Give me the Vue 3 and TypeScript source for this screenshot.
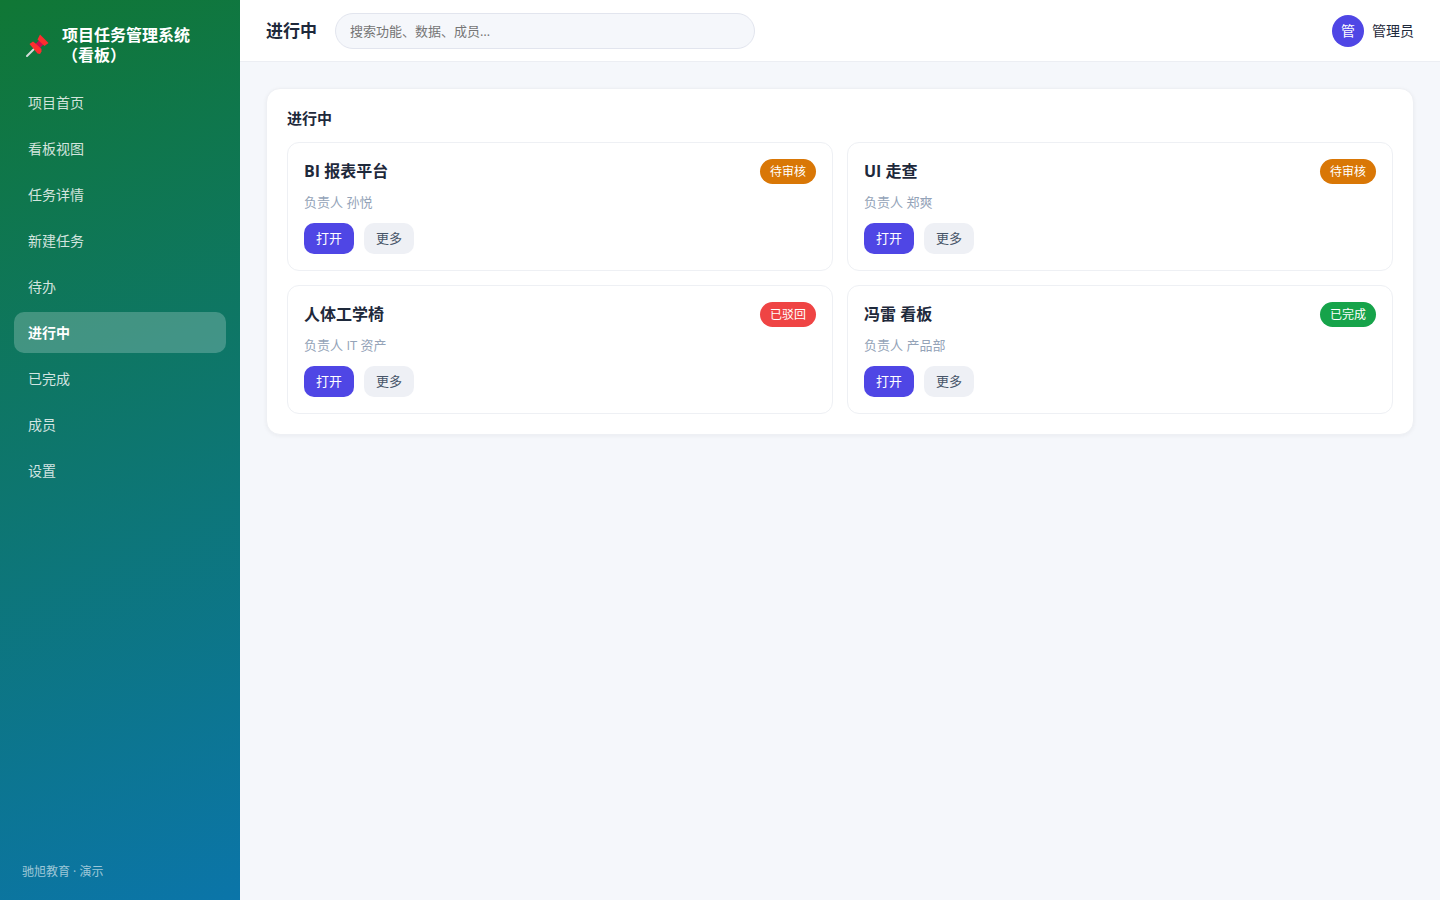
<script setup lang="ts">
interface NavItem {
  label: string
  active?: boolean
}

interface TaskCard {
  title: string
  owner: string
  status: string
  tone: 'pending' | 'rejected' | 'done'
}

const navItems: NavItem[] = [
  { label: '项目首页' },
  { label: '看板视图' },
  { label: '任务详情' },
  { label: '新建任务' },
  { label: '待办' },
  { label: '进行中', active: true },
  { label: '已完成' },
  { label: '成员' },
  { label: '设置' },
]

const cards: TaskCard[] = [
  { title: 'BI 报表平台', owner: '孙悦', status: '待审核', tone: 'pending' },
  { title: 'UI 走查', owner: '郑爽', status: '待审核', tone: 'pending' },
  { title: '人体工学椅', owner: 'IT 资产', status: '已驳回', tone: 'rejected' },
  { title: '冯雷 看板', owner: '产品部', status: '已完成', tone: 'done' },
]
</script>

<template>
  <div class="layout">
    <aside class="sidebar">
      <div class="brand">
        <svg class="brand-icon" viewBox="0 0 26 26" aria-hidden="true">
          <path d="M3 24 10 17" stroke="#d5dcda" stroke-width="2" stroke-linecap="round" />
          <path d="M11 12.500 16.500 7 21 11 15 17z" fill="#c8104e" />
          <path d="M16 2.500 24.500 11 20.500 14 13.500 7.500z" fill="#ff2d2f" />
          <path d="M5.500 12 9 9.500 11 11 17.500 17 17.500 19.500 16 22 13.500 21.500z" fill="#ff2d2f" />
        </svg>
        <span class="brand-name">项目任务管理系统（看板）</span>
      </div>
      <nav class="nav">
        <a
          v-for="item in navItems"
          :key="item.label"
          href="#"
          class="nav-link"
          :class="{ active: item.active }"
          :aria-current="item.active ? 'page' : undefined"
        >{{ item.label }}</a>
      </nav>
      <div class="sidebar-foot">驰旭教育 · 演示</div>
    </aside>

    <div class="main">
      <header class="topbar">
        <h1 class="page-title">进行中</h1>
        <input class="search" type="search" placeholder="搜索功能、数据、成员…" aria-label="搜索" />
        <div class="user">
          <span class="avatar">管</span>
          <span>管理员</span>
        </div>
      </header>

      <main class="content">
        <section class="panel">
          <h2 class="panel-title">进行中</h2>
          <div class="grid">
            <article v-for="card in cards" :key="card.title" class="card">
              <div class="card-head">
                <h3 class="card-title">{{ card.title }}</h3>
                <span class="badge" :class="card.tone">{{ card.status }}</span>
              </div>
              <p class="owner">负责人 {{ card.owner }}</p>
              <div class="actions">
                <button type="button" class="btn primary">打开</button>
                <button type="button" class="btn">更多</button>
              </div>
            </article>
          </div>
        </section>
      </main>
    </div>
  </div>
</template>

<style>
body {
  margin: 0;
}
</style>

<style scoped>
.layout,
.layout * {
  box-sizing: border-box;
}

.layout {
  display: flex;
  min-height: 100vh;
  background: #f5f7fb;
  color: #1e293b;
  font-family: "Open Sans", "Noto Sans CJK SC", sans-serif;
  font-size: 14px;
  line-height: 21px;
}

.sidebar {
  display: flex;
  flex: none;
  flex-direction: column;
  width: 240px;
  padding: 22px 14px 18px;
  background: linear-gradient(160deg, #107735, #0b75a9);
  color: #fff;
}

.brand {
  display: flex;
  align-items: center;
  gap: 12px;
  padding: 3px 8px 17px 10px;
}

.brand-icon {
  flex: none;
  width: 26px;
  height: 26px;
  fill: none;
}

.brand-name {
  font-size: 16px;
  font-weight: 700;
  line-height: 20px;
}

.nav {
  display: flex;
  flex: 1;
  flex-direction: column;
  gap: 5px;
}

.nav-link {
  padding: 10px 14px;
  border-radius: 10px;
  color: rgba(255, 255, 255, 0.82);
  text-decoration: none;
}

.nav-link.active {
  background: rgba(255, 255, 255, 0.22);
  color: #fff;
  font-weight: 700;
}

.sidebar-foot {
  padding: 0 8px;
  color: rgba(255, 255, 255, 0.6);
  font-size: 12px;
}

.main {
  display: flex;
  flex: 1;
  flex-direction: column;
  min-width: 0;
}

.topbar {
  display: flex;
  align-items: center;
  gap: 18px;
  height: 62px;
  padding: 0 26px;
  border-bottom: 1px solid #eceef3;
  background: #fff;
}

.page-title {
  flex: none;
  margin: 0;
  font-size: 17px;
  font-weight: 700;
  line-height: 25px;
}

.search {
  width: 420px;
  height: 36px;
  padding: 0 14px;
  border: 1px solid #e2e5ee;
  border-radius: 18px;
  background: #f5f7fb;
  color: #1e293b;
  font-family: inherit;
  font-size: 13px;
  appearance: none;
  outline: none;
}

.search::placeholder {
  color: #757575;
}

.user {
  display: flex;
  align-items: center;
  gap: 8px;
  margin-left: auto;
}

.avatar {
  display: flex;
  align-items: center;
  justify-content: center;
  width: 32px;
  height: 32px;
  border-radius: 50%;
  background: #4f46e5;
  color: #fff;
}

.content {
  padding: 26px;
}

.panel {
  padding: 20px;
  border: 1px solid #eef0f4;
  border-radius: 14px;
  background: #fff;
  box-shadow: 0 1px 4px rgba(15, 23, 42, 0.05);
}

.panel-title {
  margin: 0 0 14px;
  font-size: 15px;
  font-weight: 700;
  line-height: 19px;
}

.grid {
  display: grid;
  grid-template-columns: repeat(2, minmax(0, 1fr));
  gap: 14px;
}

.card {
  padding: 16px;
  border: 1px solid #eef0f4;
  border-radius: 12px;
}

.card-head {
  display: flex;
  align-items: center;
  justify-content: space-between;
}

.card-title {
  margin: 0;
  font-size: 16px;
  font-weight: 700;
  line-height: 25px;
}

.badge {
  padding: 2px 10px;
  border-radius: 13px;
  color: #fff;
  font-size: 12px;
}

.badge.pending {
  background: #d97706;
}

.badge.rejected {
  background: #ef4444;
}

.badge.done {
  background: #16a34a;
}

.owner {
  margin: 8px 0 10px;
  color: #94a3b8;
  font-size: 13px;
}

.actions {
  display: flex;
  gap: 10px;
}

.btn {
  padding: 5px 12px;
  border: 0;
  border-radius: 10px;
  background: #eef0f5;
  color: #475569;
  font-family: inherit;
  font-size: 13px;
  line-height: 21px;
  cursor: pointer;
}

.btn.primary {
  background: #4f46e5;
  color: #fff;
}
</style>
